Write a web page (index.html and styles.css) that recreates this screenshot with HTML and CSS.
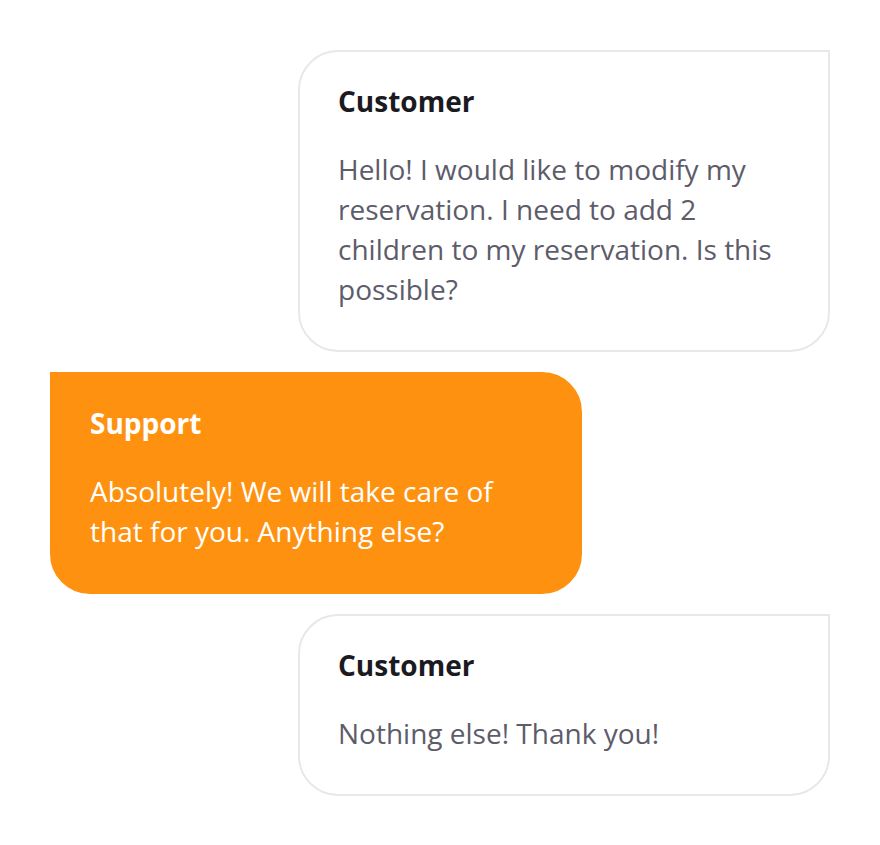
FILE: index.html
```html
<!DOCTYPE html>
<html lang="en">
<head>
<meta charset="utf-8">
<title>Chat</title>
<link rel="stylesheet" href="styles.css">
</head>
<body>
<main class="chat">
  <div class="bubble bubble-customer">
    <div class="bubble-title">Customer</div>
    <p class="bubble-text">Hello! I would like to modify my reservation. I need to add 2 children to my reservation. Is this possible?</p>
  </div>
  <div class="bubble bubble-support">
    <div class="bubble-title">Support</div>
    <p class="bubble-text">Absolutely! We will take care of that for you. Anything else?</p>
  </div>
  <div class="bubble bubble-customer">
    <div class="bubble-title">Customer</div>
    <p class="bubble-text">Nothing else! Thank you!</p>
  </div>
</main>
</body>
</html>
```
FILE: styles.css
```css
* { box-sizing: border-box; }
html, body { margin: 0; background: #ffffff; }
body {
  font-family: "Open Sans", "Liberation Sans", sans-serif;
  padding: 50px;
}
.chat {
  display: flex;
  flex-direction: column;
  gap: 20px;
  width: 780px;
}
.bubble {
  width: 532px;
  border: 2px solid #e8e8ea;
  border-radius: 40px;
  padding: 31px 38px 41px;
}
.bubble-customer {
  align-self: flex-end;
  background: #ffffff;
  border-top-right-radius: 0;
}
.bubble-support {
  align-self: flex-start;
  background: #fe9210;
  border-color: #fe9210;
  border-top-left-radius: 0;
}
.bubble-title {
  font-size: 28px;
  font-weight: 700;
  line-height: 36px;
  color: #1b1b1f;
}
.bubble-text {
  margin: 30px 0 0;
  font-size: 28px;
  font-weight: 400;
  line-height: 40px;
  color: #5d5c6a;
}
.bubble-support .bubble-title,
.bubble-support .bubble-text {
  color: #ffffff;
}
```
